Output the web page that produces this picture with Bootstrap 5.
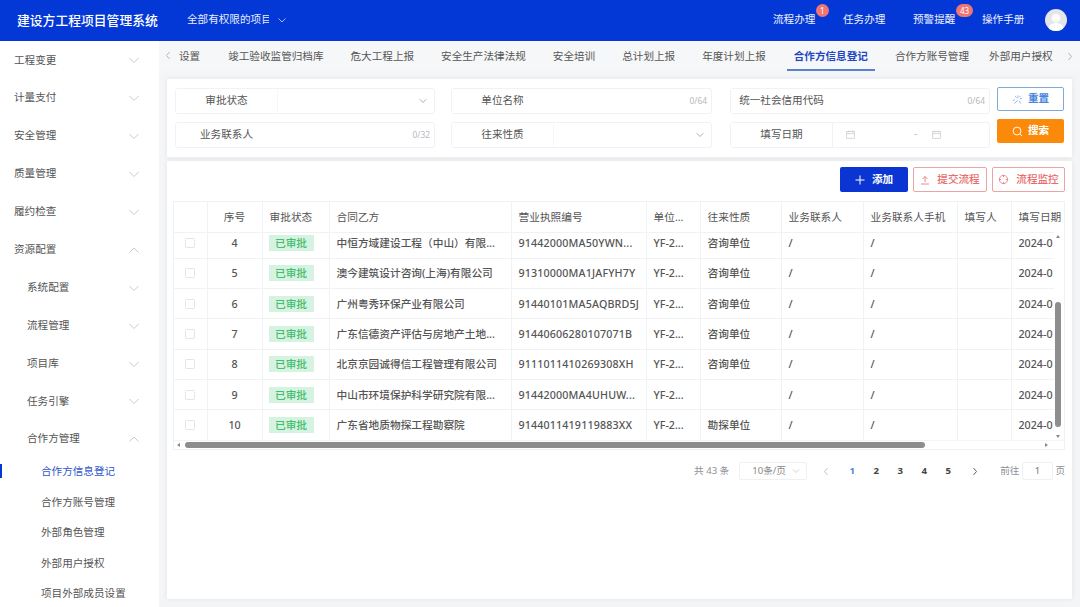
<!DOCTYPE html>
<html lang="zh-CN">
<head>
<meta charset="utf-8">
<title>建设方工程项目管理系统</title>
<link href="https://cdn.jsdelivr.net/npm/bootstrap@5.3.0/dist/css/bootstrap.min.css" rel="stylesheet">
<style>
html,body{height:607px;overflow:hidden}
body{font-family:"Noto Sans","Noto Sans CJK SC",sans-serif;font-size:10.6px;color:#555;background:#f4f5f7}
svg{display:block;flex:none}
.topbar{height:40.5px;background:#0438d6;color:#fff;padding:0 13px 0 17px}
.sysname{font-size:12.8px;width:170px;font-weight:500}
.scope{width:81.500px;overflow:hidden;white-space:nowrap;color:#e8eeff}
.topnav{color:#eef2ff}
.topnav .tn{position:relative}
.tn1{width:70px}.tn2{width:70px}.tn3{width:69px}.tn4{width:63px}
.tn .badge{position:absolute;top:-8px;background:#f07575;font-size:8px;font-weight:400;padding:1.5px 4px;line-height:10px;border-radius:7px}
.avatar{width:22px;height:22px;border-radius:50%;background:#e4e6ea;overflow:hidden}
.shell{height:566.5px}
.sidenav{width:159px;background:#fff;height:100%;overflow:hidden;padding-top:1px}
.sidenav a{display:flex;align-items:center;justify-content:space-between;height:37.9px;padding:0 19px 0 14px;color:#555;text-decoration:none;position:relative}
.sidenav a.lv2{padding-left:27px}
.sidenav a.lv3{padding-left:41px;height:30.4px}
.sidenav a.lv3.on{color:#3156c9;margin-top:-2px;height:31.400px}
.sidenav a.lv3.on::before{content:"";position:absolute;left:0;top:8px;width:2px;height:14px;background:#0438d6}
.chev{color:#c2c5cb}
.mainpane{width:921px;min-width:0}
.tabstrip{height:30px;background:#f6f7f8;padding-left:6px;position:relative}
.tabstrip .nav-link{padding:0;color:#555;font-size:10.6px;height:30px;line-height:30px;position:relative;white-space:nowrap}
.tabstrip .nav-link.active{color:#1f47c4;font-weight:700}
.tabstrip .nav-link.active::after{content:"";position:absolute;left:-7px;right:-7px;bottom:0;height:1.5px;background:#5b7fcf}
.t1{margin-left:8px}.t2{margin-left:28px}.t3{margin-left:27px}.t8{margin-left:28px}.t9{margin-left:27px}.t10{margin-left:20px}
.tabstrip .tabprev,.tabstrip .tabnext{color:#a9adb4}
.tabnext{position:absolute;right:7px;top:11px}
.panel{background:#fff;box-shadow:0 0 5px rgba(30,40,60,.08);margin-left:8px;width:905px}
.filterpanel{height:78px;margin-top:8.5px;padding:9px 8px 0 8px}
.frow{gap:16px;height:34px}
.fbox{width:260px;height:26px;flex-wrap:nowrap;border:1px solid #f1f2f4;border-radius:3px}
.fbox.f2{width:261px}
.fbox.f3{margin-left:2px}
.fbox .input-group-text{background:#fff;border:0;font-size:10.6px;color:#555;padding:0;height:24px;justify-content:center;width:102px;border-right:1px solid #f1f2f4;border-radius:0}
.fbox .form-control,.fbox .form-select{border:0;height:24px;min-height:0;font-size:9px;padding:0 6px;box-shadow:none;background-color:#fff}
.fbox .form-select{background-position:right 6px center;background-size:10px 8px;opacity:.4}
.counter{font-size:8.400px;color:#b5b8bd;padding-right:4px;align-self:center;z-index:5}
.datebox{flex:1;color:#bcc0c6;padding:0 0 2px 14px}
.dash{margin:0 15px 0 59px}
.btn-reset,.btn-search{width:67px;height:24px;font-size:10.6px;padding:0;font-weight:700;border-radius:2px;gap:5px}
.btn-reset{background:#fff;border:1px solid #7eaad4;color:#4a86db;margin-top:-1px;margin-left:-9px}
.btn-search{background:#fb8a0a;border:0;color:#fff;margin-top:-3px;margin-left:-9px}
.tablepanel{height:438px;margin-top:4px;padding:6px 7px 0 6px}
.actbar{gap:5px;height:34px;padding-right:0}
.btn-add,.btn-line{height:25px;font-size:10.6px;padding:0;border-radius:2px;gap:7px;font-weight:500}
.btn-add{width:68px;background:#0a35d2;color:#fff;border:0;font-weight:700}
.btn-line{width:74px;border:1px solid #eaa4a4;background:#fff;color:#ea6a6a}
.btn-line.lastbtn{width:73px}
.btn-add:hover{background:#0a35d2;color:#fff}
.gridwrap{position:relative;height:249px;border:1px solid #eff1f3;overflow:hidden;width:892px}
.dtable{table-layout:fixed;width:892px;margin:0;border-collapse:collapse;font-size:10.7px;color:#555}
.dtable th,.dtable td{border:1px solid #eff3f4;padding:0 7px;height:30.4px;vertical-align:middle;white-space:nowrap;overflow:hidden;color:#555;font-weight:500;box-shadow:none}
.dtable thead th{height:30px;border-top:0;font-weight:400}
.dtable tr>*:first-child{border-left:0}
.dtable tr>*:last-child{border-right:0}
.dtable tbody tr:first-child td{height:26px;padding-bottom:4px}
.dtable td.ct,.dtable th.ct{text-align:center}
.dtable td.lastc{padding-right:0}
.dtable td.lic{letter-spacing:.15px;padding-right:0}
.dtable td.st{padding-left:6px}
.tick{width:10px;height:10px;margin:0 auto;display:block;border:1px solid #e3e5e8;border-radius:1.5px;background:#fff}
.okTag{display:block;width:45px;height:16px;line-height:16px;text-align:center;background:#d6f2e1;color:#43bd6e;font-weight:500}
.vtrack{position:absolute;right:0;top:30px;bottom:8px;width:10px;background:#fff}
.vthumb{position:absolute;left:1px;top:70px;width:6px;height:125px;border-radius:3px;background:#8d8d8d}
.htrack{position:absolute;left:0;right:0;bottom:0;height:9px;background:#fff;border-top:1px solid #f3f4f5}
.hthumb{position:absolute;left:11px;top:1px;width:740px;height:6px;border-radius:3px;background:#8d8d8d}
.arr{position:absolute;width:0;height:0;border-style:solid}
.a-up{left:2px;top:3px;border-width:0 2.5px 3px;border-color:transparent transparent #888}
.a-dn{left:2px;bottom:3px;border-width:3px 2.5px 0;border-color:#888 transparent transparent}
.a-lf{left:3px;top:2px;border-width:2.5px 3px 2.5px 0;border-color:transparent #888 transparent transparent}
.a-rt{right:16px;top:2px;border-width:2.5px 0 2.5px 3px;border-color:transparent transparent transparent #888}
.pagerow{height:20px;margin-top:11px;padding-right:0;color:#8d9096;font-size:9.6px}
.pagesize{width:68px;height:18px;border:1px solid #eef0f2;border-radius:2px;font-size:9.6px;color:#888;margin-left:10px;padding:0 6px 0 12px}
.pagerow .pagination{margin:0 0 0 5px;--bs-pagination-border-width:0;--bs-pagination-bg:transparent}
.pagerow .page-link{border:0;background:transparent;padding:0;width:24px;margin-left:0 !important;text-align:center;font-size:9.6px;font-weight:700;color:#444;line-height:18px}
.pagerow .page-item.active .page-link{color:#3f8ad8;background:transparent}
.pagerow .page-link.arrowl{display:flex;align-items:center;justify-content:center;height:18px;width:28px}
.pagerow .page-link.arrowr{display:flex;align-items:center;justify-content:center;height:18px;width:30px}
.gotext{margin-left:10px}
.gojump{width:31px;height:18px;border:1px solid #eef0f2;border-radius:2px;text-align:center;margin:0 2.5px;line-height:16px;color:#777}
</style>
</head>
<body>
<header class="topbar d-flex align-items-center">
  <div class="sysname">建设方工程项目管理系统</div>
  <div class="scope">全部有权限的项目</div>
  <svg class="ms-2" width="10" height="10" viewBox="0 0 10 10" fill="none" stroke="#b9c8f3" stroke-width=".9"><path d="M1.5 3.5 5 7l3.5-3.5"/></svg>
  <nav class="topnav d-flex align-items-center ms-auto">
    <div class="tn tn1">流程办理<span class="badge" style="left:43px">1</span></div>
    <div class="tn tn2">任务办理</div>
    <div class="tn tn3">预警提醒<span class="badge" style="left:43px">43</span></div>
    <div class="tn tn4">操作手册</div>
  </nav>
  <div class="avatar">
    <svg width="22" height="22" viewBox="0 0 22 22"><circle cx="11" cy="9" r="4.2" fill="#fff"/><path d="M3 22c.5-6 4-8 8-8s7.500 2 8 8z" fill="#fff"/></svg>
  </div>
</header>
<div class="shell d-flex">
  <aside class="sidenav">
    <nav class="nav flex-column flex-nowrap">
      <a href="#">工程变更<svg class="chev" width="12" height="10" viewBox="0 0 12 10" fill="none" stroke="currentColor" stroke-width=".9"><path d="M1.500 3l4.500 4.500L10.500 3"/></svg></a>
      <a href="#">计量支付<svg class="chev" width="12" height="10" viewBox="0 0 12 10" fill="none" stroke="currentColor" stroke-width=".9"><path d="M1.500 3l4.500 4.500L10.500 3"/></svg></a>
      <a href="#">安全管理<svg class="chev" width="12" height="10" viewBox="0 0 12 10" fill="none" stroke="currentColor" stroke-width=".9"><path d="M1.500 3l4.500 4.500L10.500 3"/></svg></a>
      <a href="#">质量管理<svg class="chev" width="12" height="10" viewBox="0 0 12 10" fill="none" stroke="currentColor" stroke-width=".9"><path d="M1.500 3l4.500 4.500L10.500 3"/></svg></a>
      <a href="#">履约检查<svg class="chev" width="12" height="10" viewBox="0 0 12 10" fill="none" stroke="currentColor" stroke-width=".9"><path d="M1.500 3l4.500 4.500L10.500 3"/></svg></a>
      <a href="#">资源配置<svg class="chev" width="12" height="10" viewBox="0 0 12 10" fill="none" stroke="currentColor" stroke-width=".9"><path d="M1.500 7.500 6 3l4.500 4.500"/></svg></a>
      <a href="#" class="lv2">系统配置<svg class="chev" width="12" height="10" viewBox="0 0 12 10" fill="none" stroke="currentColor" stroke-width=".9"><path d="M1.500 3l4.500 4.500L10.500 3"/></svg></a>
      <a href="#" class="lv2">流程管理<svg class="chev" width="12" height="10" viewBox="0 0 12 10" fill="none" stroke="currentColor" stroke-width=".9"><path d="M1.500 3l4.500 4.500L10.500 3"/></svg></a>
      <a href="#" class="lv2">项目库<svg class="chev" width="12" height="10" viewBox="0 0 12 10" fill="none" stroke="currentColor" stroke-width=".9"><path d="M1.500 3l4.500 4.500L10.500 3"/></svg></a>
      <a href="#" class="lv2">任务引擎<svg class="chev" width="12" height="10" viewBox="0 0 12 10" fill="none" stroke="currentColor" stroke-width=".9"><path d="M1.500 3l4.500 4.500L10.500 3"/></svg></a>
      <a href="#" class="lv2">合作方管理<svg class="chev" width="12" height="10" viewBox="0 0 12 10" fill="none" stroke="currentColor" stroke-width=".9"><path d="M1.500 7.500 6 3l4.500 4.500"/></svg></a>
      <a href="#" class="lv3 on">合作方信息登记</a>
      <a href="#" class="lv3">合作方账号管理</a>
      <a href="#" class="lv3">外部角色管理</a>
      <a href="#" class="lv3">外部用户授权</a>
      <a href="#" class="lv3">项目外部成员设置</a>
    </nav>
  </aside>
  <main class="mainpane">
    <div class="tabstrip">
      <nav class="nav flex-nowrap align-items-center">
        <svg class="tabprev" width="6" height="9" viewBox="0 0 6 9" fill="none" stroke="currentColor" stroke-width=".9"><path d="M4.500 1 1.500 4.500l3 3.500"/></svg>
        <a class="nav-link t1" href="#">设置</a>
        <a class="nav-link t2" href="#">竣工验收监管归档库</a>
        <a class="nav-link t3" href="#">危大工程上报</a>
        <a class="nav-link t3" href="#">安全生产法律法规</a>
        <a class="nav-link t3" href="#">安全培训</a>
        <a class="nav-link t3" href="#">总计划上报</a>
        <a class="nav-link t3" href="#">年度计划上报</a>
        <a class="nav-link active t8" href="#">合作方信息登记</a>
        <a class="nav-link t9" href="#">合作方账号管理</a>
        <a class="nav-link t10" href="#">外部用户授权</a>
      </nav>
      <svg class="tabnext" width="6" height="9" viewBox="0 0 6 9" fill="none" stroke="currentColor" stroke-width=".9"><path d="M1.500 1l3 3.500-3 3.500"/></svg>
    </div>

    <section class="panel filterpanel">
      <div class="d-flex frow">
        <div class="input-group fbox">
          <span class="input-group-text">审批状态</span>
          <select class="form-select" aria-label="审批状态"><option></option></select>
        </div>
        <div class="input-group fbox f2">
          <span class="input-group-text">单位名称</span>
          <input class="form-control" aria-label="单位名称">
          <span class="counter">0/64</span>
        </div>
        <div class="input-group fbox f3">
          <span class="input-group-text">统一社会信用代码</span>
          <input class="form-control" aria-label="统一社会信用代码">
          <span class="counter">0/64</span>
        </div>
        <button class="btn btn-reset d-flex align-items-center justify-content-center">
          <svg width="11" height="11" viewBox="0 0 12 12" fill="none" stroke="#7fa9e0" stroke-width=".9"><path d="M6.500 1.500v3M3 6.500l-2 .5M6 7l-3.500 3.500M8 7.500l1.500 3M8.500 5.500l2.500-1M5 4 3 2M8 3.500 9.500 2"/></svg>
          重置
        </button>
      </div>
      <div class="d-flex frow">
        <div class="input-group fbox">
          <span class="input-group-text">业务联系人</span>
          <input class="form-control" aria-label="业务联系人">
          <span class="counter">0/32</span>
        </div>
        <div class="input-group fbox f2">
          <span class="input-group-text">往来性质</span>
          <select class="form-select" aria-label="往来性质"><option></option></select>
        </div>
        <div class="input-group fbox f3">
          <span class="input-group-text">填写日期</span>
          <div class="datebox d-flex align-items-center">
            <svg width="9" height="9" viewBox="0 0 10 10" fill="none" stroke="#c4c7cc" stroke-width=".8"><rect x=".8" y="1.800" width="8.400" height="7.400"/><path d="M.8 4h8.400M3 .5v2M7 .5v2"/></svg>
            <span class="dash">-</span>
            <svg width="9" height="9" viewBox="0 0 10 10" fill="none" stroke="#c4c7cc" stroke-width=".8"><rect x=".8" y="1.800" width="8.400" height="7.400"/><path d="M.8 4h8.400M3 .5v2M7 .5v2"/></svg>
          </div>
        </div>
        <button class="btn btn-search d-flex align-items-center justify-content-center">
          <svg width="11" height="11" viewBox="0 0 12 12" fill="none" stroke="#fff" stroke-width="1"><circle cx="5.500" cy="5.500" r="4.300"/><path d="m8.700 8.700 2.300 2.300"/></svg>
          搜索
        </button>
      </div>
    </section>

    <section class="panel tablepanel">
      <div class="d-flex justify-content-end actbar">
        <button class="btn btn-add d-flex align-items-center justify-content-center">
          <svg width="10" height="10" viewBox="0 0 10 10" stroke="#fff" stroke-width="1"><path d="M5 .5v9M.5 5h9"/></svg>添加
        </button>
        <button class="btn btn-line d-flex align-items-center justify-content-center">
          <svg width="10" height="10" viewBox="0 0 10 10" fill="none" stroke="#ea7a7a" stroke-width=".9"><path d="M5 7V1.500M2.500 4 5 1.500 7.500 4M1 9h8"/></svg>提交流程
        </button>
        <button class="btn btn-line lastbtn d-flex align-items-center justify-content-center">
          <svg width="11" height="11" viewBox="0 0 12 12" fill="none" stroke="#ea7a7a" stroke-width=".9"><circle cx="6" cy="6" r="4.500"/><path d="M6 1v2.500M6 8.500V11M1 6h2.500M8.500 6H11"/></svg>流程监控
        </button>
      </div>
      <div class="gridwrap">
        <table class="table dtable">
          <colgroup><col style="width:33px"><col style="width:55px"><col style="width:67px"><col style="width:182px"><col style="width:135px"><col style="width:54px"><col style="width:81px"><col style="width:82px"><col style="width:94px"><col style="width:54px"><col style="width:55px"></colgroup>
          <thead>
            <tr><th></th><th class="ct">序号</th><th>审批状态</th><th>合同乙方</th><th>营业执照编号</th><th>单位...</th><th>往来性质</th><th>业务联系人</th><th>业务联系人手机</th><th>填写人</th><th>填写日期</th></tr>
          </thead>
          <tbody>
            <tr><td><span class="tick"></span></td><td class="ct">4</td><td class="st"><span class="okTag">已审批</span></td><td>中恒方域建设工程（中山）有限...</td><td class="lic">91442000MA50YWN...</td><td>YF-2...</td><td>咨询单位</td><td>/</td><td>/</td><td></td><td class="lastc">2024-0</td></tr>
            <tr><td><span class="tick"></span></td><td class="ct">5</td><td class="st"><span class="okTag">已审批</span></td><td>澳今建筑设计咨询(上海)有限公司</td><td class="lic">91310000MA1JAFYH7Y</td><td>YF-2...</td><td>咨询单位</td><td>/</td><td>/</td><td></td><td class="lastc">2024-0</td></tr>
            <tr><td><span class="tick"></span></td><td class="ct">6</td><td class="st"><span class="okTag">已审批</span></td><td>广州粤秀环保产业有限公司</td><td class="lic">91440101MA5AQBRD5J</td><td>YF-2...</td><td>咨询单位</td><td>/</td><td>/</td><td></td><td class="lastc">2024-0</td></tr>
            <tr><td><span class="tick"></span></td><td class="ct">7</td><td class="st"><span class="okTag">已审批</span></td><td>广东信德资产评估与房地产土地...</td><td class="lic">91440606280107071B</td><td>YF-2...</td><td>咨询单位</td><td>/</td><td>/</td><td></td><td class="lastc">2024-0</td></tr>
            <tr><td><span class="tick"></span></td><td class="ct">8</td><td class="st"><span class="okTag">已审批</span></td><td>北京京园诚得信工程管理有限公司</td><td class="lic">9111011410269308XH</td><td>YF-2...</td><td>咨询单位</td><td>/</td><td>/</td><td></td><td class="lastc">2024-0</td></tr>
            <tr><td><span class="tick"></span></td><td class="ct">9</td><td class="st"><span class="okTag">已审批</span></td><td>中山市环境保护科学研究院有限...</td><td class="lic">91442000MA4UHUW...</td><td>YF-2...</td><td></td><td>/</td><td>/</td><td></td><td class="lastc">2024-0</td></tr>
            <tr><td><span class="tick"></span></td><td class="ct">10</td><td class="st"><span class="okTag">已审批</span></td><td>广东省地质物探工程勘察院</td><td class="lic">9144011419119883XX</td><td>YF-2...</td><td>勘探单位</td><td>/</td><td>/</td><td></td><td class="lastc">2024-0</td></tr>
          </tbody>
        </table>
        <div class="vtrack"><i class="arr a-up"></i><div class="vthumb"></div><i class="arr a-dn"></i></div>
        <div class="htrack"><i class="arr a-lf"></i><div class="hthumb"></div><i class="arr a-rt"></i></div>
      </div>
      <div class="pagerow d-flex align-items-center justify-content-end">
        <span>共 43 条</span>
        <div class="pagesize d-flex align-items-center justify-content-between">10条/页
          <svg width="8" height="6" viewBox="0 0 8 6" fill="none" stroke="#c0c3c8" stroke-width=".8"><path d="M1 1.500 4 4.500l3-3"/></svg>
        </div>
        <ul class="pagination">
          <li class="page-item disabled"><a class="page-link arrowl" href="#" aria-label="上一页"><svg width="6" height="9" viewBox="0 0 6 9" fill="none" stroke="#b5b8bd" stroke-width=".9"><path d="M4.500 1 1.500 4.500l3 3.500"/></svg></a></li>
          <li class="page-item active"><a class="page-link" href="#">1</a></li>
          <li class="page-item"><a class="page-link" href="#">2</a></li>
          <li class="page-item"><a class="page-link" href="#">3</a></li>
          <li class="page-item"><a class="page-link" href="#">4</a></li>
          <li class="page-item"><a class="page-link" href="#">5</a></li>
          <li class="page-item"><a class="page-link arrowr" href="#" aria-label="下一页"><svg width="6" height="9" viewBox="0 0 6 9" fill="none" stroke="#555" stroke-width=".9"><path d="M1.500 1l3 3.500-3 3.500"/></svg></a></li>
        </ul>
        <span class="gotext">前往</span>
        <div class="gojump">1</div>
        <span>页</span>
      </div>
    </section>
  </main>
</div>
<script src="https://cdn.jsdelivr.net/npm/bootstrap@5.3.0/dist/js/bootstrap.bundle.min.js"></script>
</body>
</html>
